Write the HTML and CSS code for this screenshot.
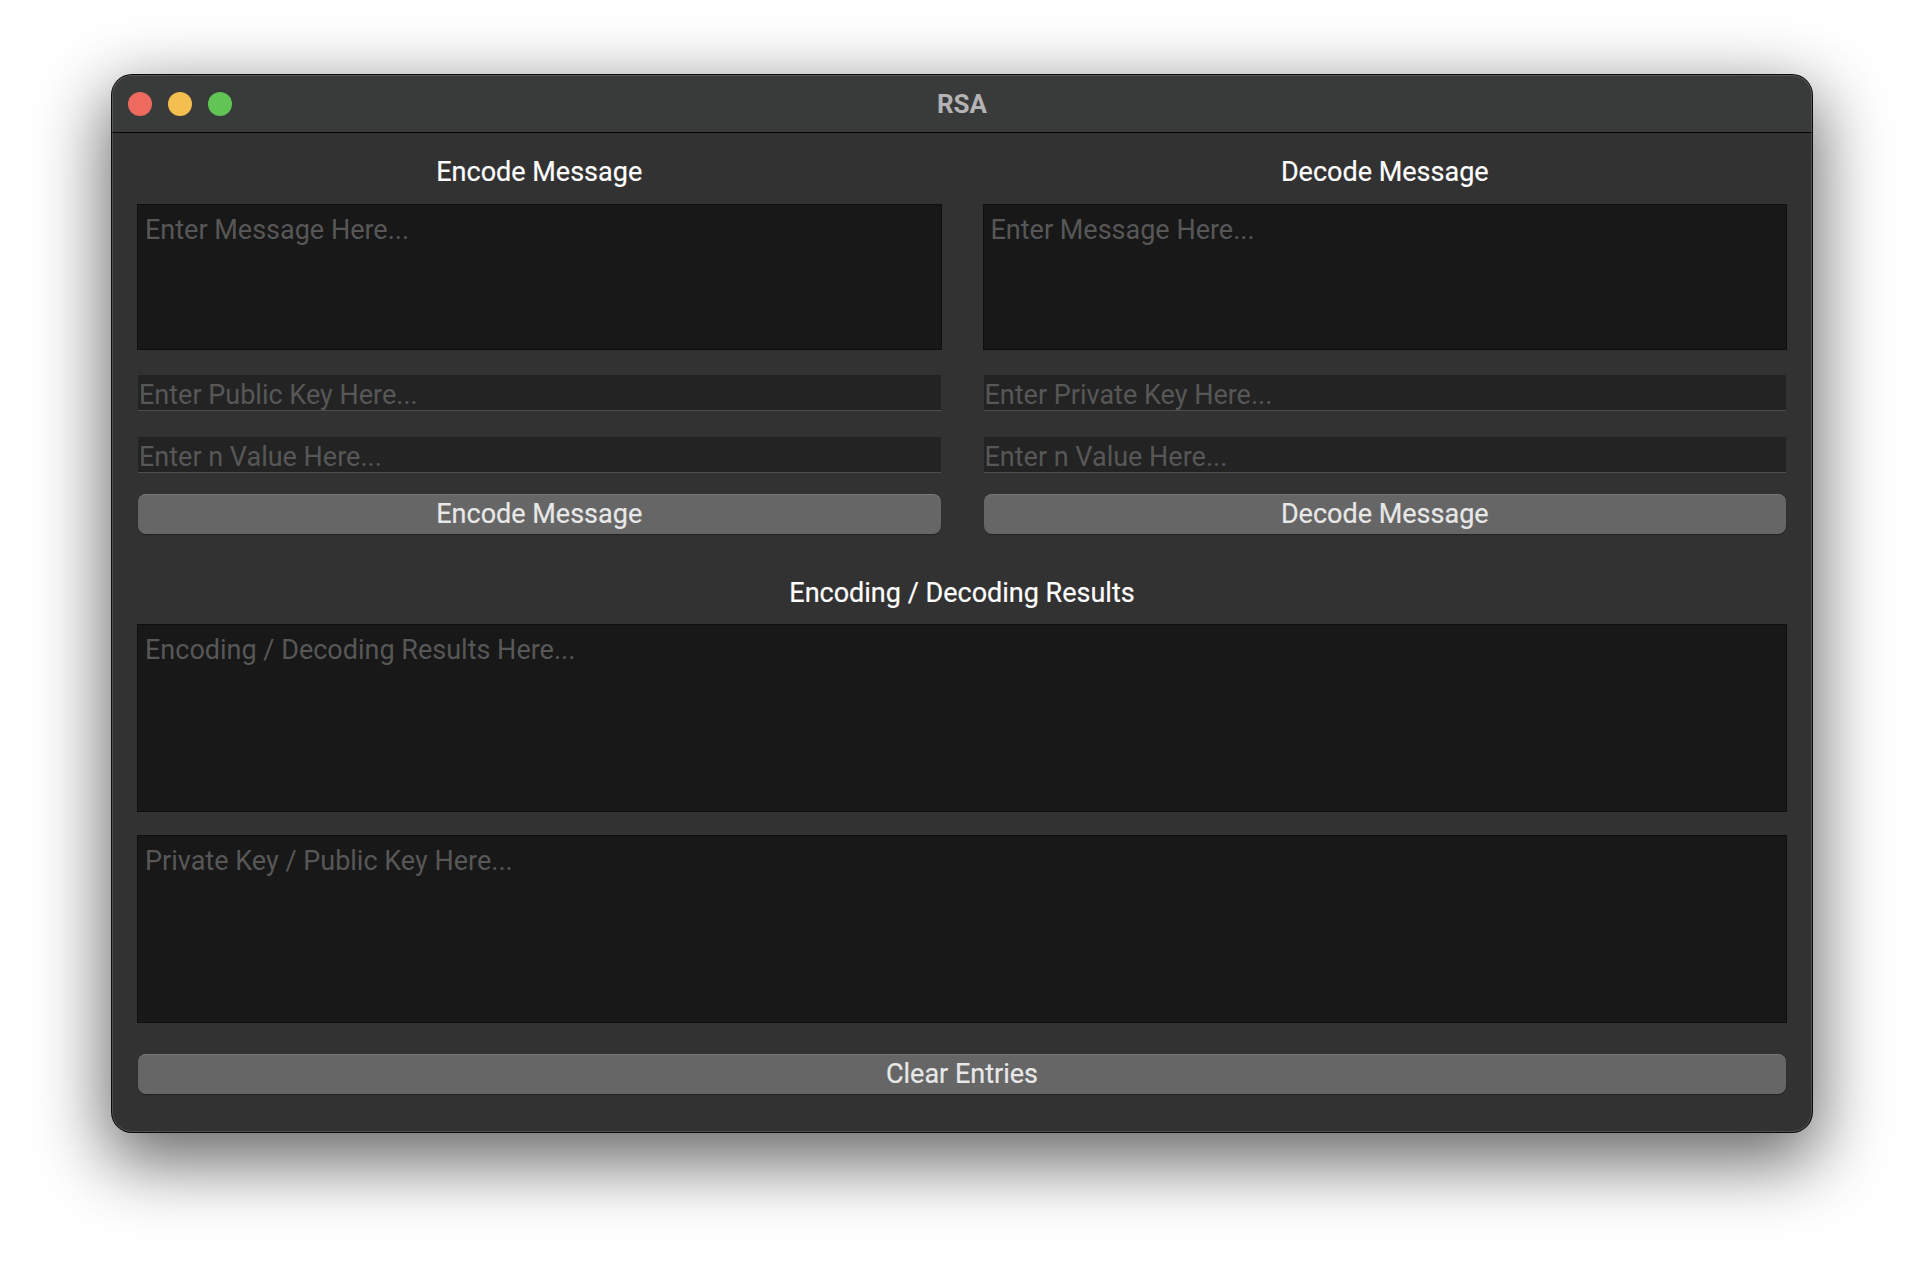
FILE: index.html
```html
<!DOCTYPE html>
<html lang="en">
<head>
<meta charset="utf-8">
<title>RSA</title>
<link rel="stylesheet" href="styles.css">
</head>
<body>
<div class="desk">
  <div class="window">
    <div class="titlebar">
      <div class="lights">
        <span class="light red"></span>
        <span class="light yellow"></span>
        <span class="light green"></span>
      </div>
      <div class="title">RSA</div>
      <div></div>
    </div>
    <div class="content">
      <div class="cols">
        <div class="col">
          <div class="heading">Encode Message</div>
          <textarea class="area area-msg" placeholder="Enter Message Here..."></textarea>
          <input class="field field-first" type="text" placeholder="Enter Public Key Here...">
          <input class="field field-second" type="text" placeholder="Enter n Value Here...">
          <button class="btn btn-col">Encode Message</button>
        </div>
        <div class="col">
          <div class="heading">Decode Message</div>
          <textarea class="area area-msg" placeholder="Enter Message Here..."></textarea>
          <input class="field field-first" type="text" placeholder="Enter Private Key Here...">
          <input class="field field-second" type="text" placeholder="Enter n Value Here...">
          <button class="btn btn-col">Decode Message</button>
        </div>
      </div>
      <div class="heading heading-results">Encoding / Decoding Results</div>
      <textarea class="area area-big" placeholder="Encoding / Decoding Results Here..."></textarea>
      <textarea class="area area-big area-keys" placeholder="Private Key / Public Key Here..."></textarea>
      <button class="btn btn-clear">Clear Entries</button>
    </div>
  </div>
</div>
</body>
</html>
```

FILE: styles.css
```css
html, body {
  margin: 0;
  padding: 0;
  background: #ffffff;
}

body {
  font-family: Roboto, "Liberation Sans", sans-serif;
}

.desk {
  width: 1924px;
  height: 1280px;
  box-sizing: border-box;
  padding: 75px 0 0 112px;
}

.window {
  position: relative;
  width: 1700px;
  height: 1057px;
  background: #323232;
  border-radius: 20px;
  overflow: hidden;
  display: flex;
  flex-direction: column;
  box-shadow: 0 0 0 1px #0b0b0b, 0 24px 70px 6px rgba(0, 0, 0, 0.6);
}

.window::after {
  content: "";
  position: absolute;
  inset: 0;
  border-radius: 20px;
  box-shadow: inset 0 0 0 1px rgba(255, 255, 255, 0.14);
  pointer-events: none;
}

.titlebar {
  height: 57px;
  flex: 0 0 auto;
  background: #393b3b;
  border-bottom: 1px solid #050505;
  display: grid;
  grid-template-columns: 1fr auto 1fr;
  align-items: center;
  padding: 0 16px;
}

.lights {
  display: flex;
  gap: 16px;
  padding-top: 1px;
}

.light {
  width: 24px;
  height: 24px;
  border-radius: 50%;
  display: block;
}

.red { background: #ee6a5f; }
.yellow { background: #f5bf4f; }
.green { background: #61c454; }

.title {
  font-weight: 700;
  font-size: 26px;
  line-height: 30px;
  color: #b3b3b3;
  text-align: center;
}

.content {
  flex: 1 1 auto;
  display: flex;
  flex-direction: column;
  padding: 0 25px;
}

.cols {
  display: grid;
  grid-template-columns: 1fr 1fr;
  column-gap: 41px;
}

.col {
  display: flex;
  flex-direction: column;
}

.heading {
  font-size: 27px;
  line-height: 30px;
  height: 30px;
  color: #ffffff;
  text-align: center;
  margin: 24px 0 17px;
  -webkit-text-stroke: 0.2px #ffffff;
}

.heading-results {
  margin: 44px 0 16px;
}

.area {
  display: block;
  box-sizing: border-box;
  resize: none;
  margin: 0;
  background: #181818;
  border: 1px solid #0f0f0f;
  border-radius: 0;
  outline: none;
  font-family: Roboto, "Liberation Sans", sans-serif;
  font-size: 27px;
  line-height: 30px;
  color: #d0d0d0;
  padding: 10px 7px 0;
  width: 100%;
}

.area::placeholder,
.field::placeholder {
  color: #575757;
  opacity: 1;
}

.area-msg {
  height: 146px;
}

.area-big {
  height: 188px;
}

.area-keys {
  margin-top: 23px;
}

.field {
  display: block;
  box-sizing: border-box;
  height: 36px;
  margin: 25px 1px 0;
  padding: 4px 0 0 1px;
  background: #232323;
  border: none;
  border-bottom: 1px solid #4e4e4e;
  border-radius: 0;
  outline: none;
  font-family: Roboto, "Liberation Sans", sans-serif;
  font-size: 27px;
  line-height: 30px;
  color: #d0d0d0;
}

.field-second {
  margin-top: 26px;
}

.btn {
  display: block;
  height: 40px;
  margin: 21px 1px 0;
  padding: 0;
  background: #666666;
  border: none;
  border-radius: 8px;
  box-shadow: inset 0 1px 0 rgba(255, 255, 255, 0.13), 0 1px 1px rgba(0, 0, 0, 0.35);
  font-family: Roboto, "Liberation Sans", sans-serif;
  font-size: 27px;
  line-height: 40px;
  color: #e8e8e8;
  text-align: center;
  -webkit-text-stroke: 0.2px #e8e8e8;
}

.btn-clear {
  margin-top: 31px;
}
```
